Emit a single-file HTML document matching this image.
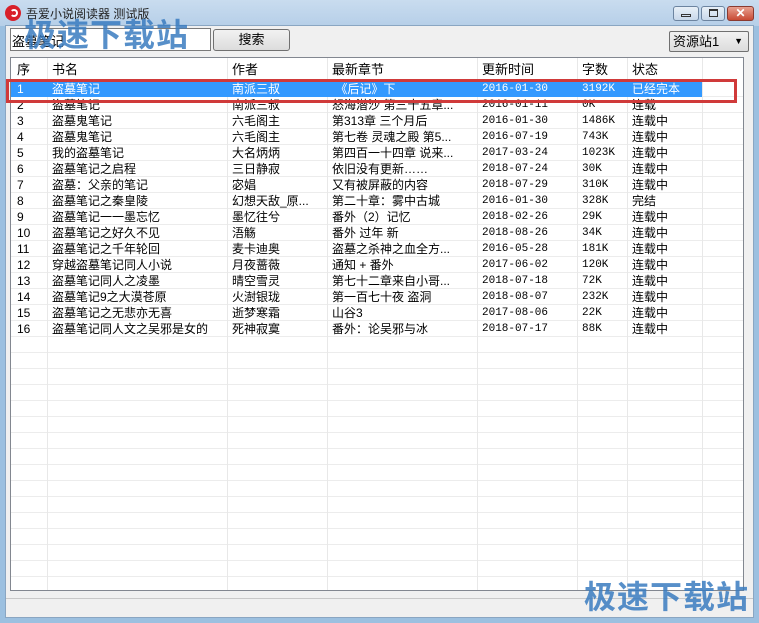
<!DOCTYPE html><html><head><meta charset="utf-8"><style>
*{margin:0;padding:0;box-sizing:border-box}
body{width:759px;height:623px;overflow:hidden;background:#9cc0e0;font-family:"Liberation Sans","Noto Sans CJK SC",sans-serif;font-size:12px;position:relative}
.a{position:absolute}
#tb{left:0;top:0;width:759px;height:26px;background:linear-gradient(#c9dcef,#b6cfe8)}
#cl{left:5px;top:25px;width:749px;height:593px;background:#f0f0f0;border:1px solid #8aa6c2}
.r{position:absolute;left:11px;width:732px;height:16px;line-height:16px;white-space:nowrap}
.r span{position:absolute;top:0;overflow:hidden}
.c0{left:6px}.c1{left:41px}.c2{left:221px}.c3{left:321px}.c4{left:471px;font-family:"Liberation Mono",monospace;font-size:11px}.c5{left:571px;font-family:"Liberation Mono",monospace;font-size:11px}.c6{left:621px}
.vl{position:absolute;top:58px;width:1px;height:532px;background:#e8e8e8}
</style></head><body>
<div class="a" id="tb"></div>
<div class="a" style="left:5px;top:5px;width:16px;height:16px;border-radius:50%;background:#d8202a"></div>
<div class="a" style="left:10px;top:9px;width:8px;height:8px;border-radius:50%;border:2px solid #fff;border-left-color:transparent"></div>
<div class="a" style="left:26px;top:5px;font-size:12px;color:#222">吾爱小说阅读器 测试版</div>
<div class="a" style="left:673px;top:6px;width:26px;height:15px;border:1px solid #6c84a0;border-radius:3px;background:linear-gradient(#e8f0f8,#c8d8ea)"></div>
<div class="a" style="left:681px;top:14px;width:10px;height:3px;border:1px solid #333"></div>
<div class="a" style="left:701px;top:6px;width:24px;height:15px;border:1px solid #6c84a0;border-radius:3px;background:linear-gradient(#e8f0f8,#c8d8ea)"></div>
<div class="a" style="left:709px;top:9px;width:9px;height:8px;border:1px solid #333;border-top-width:2px"></div>
<div class="a" style="left:727px;top:6px;width:27px;height:15px;border:1px solid #8a3a30;border-radius:3px;background:linear-gradient(#e8a090,#c84a34);color:#fff;font-weight:bold;text-align:center;line-height:13px;font-size:12px">✕</div>
<div class="a" id="cl"></div>
<div class="a" style="left:10px;top:28px;width:201px;height:23px;background:#fff;border:1px solid #7a7a7a;padding:2px 1px;font-size:13px">盗墓笔记</div>
<div class="a" style="left:213px;top:29px;width:77px;height:22px;border:1px solid #707070;border-radius:3px;background:linear-gradient(#f2f2f2,#dcdcdc);text-align:center;line-height:20px;font-size:13px">搜索</div>
<div class="a" style="left:669px;top:31px;width:80px;height:21px;border:1px solid #707070;border-radius:2px;background:linear-gradient(#f2f2f2,#dcdcdc);padding-left:3px;line-height:19px;font-size:13px">资源站1<span style="position:absolute;right:5px;font-size:9px">▼</span></div>
<div class="a" style="left:10px;top:57px;width:734px;height:534px;border:1px solid #828790;background:#fff repeating-linear-gradient(to bottom,transparent 0,transparent 39px,#ececec 39px,#ececec 40px);background:#fff"></div>
<div class="a" style="left:11px;top:96px;width:732px;height:494px;background:repeating-linear-gradient(to bottom,#ececec 0,#ececec 1px,transparent 1px,transparent 16px)"></div>
<div class="vl" style="left:47px"></div><div class="vl" style="left:227px"></div><div class="vl" style="left:327px"></div><div class="vl" style="left:477px"></div><div class="vl" style="left:577px"></div><div class="vl" style="left:627px"></div><div class="vl" style="left:702px"></div>
<div class="r" style="top:61px;height:18px;line-height:18px;font-size:13px"><span class="c0">序</span><span class="c1">书名</span><span class="c2">作者</span><span class="c3">最新章节</span><span style="left:471px">更新时间</span><span style="left:571px">字数</span><span class="c6">状态</span></div>
<div class="a" style="left:11px;top:81px;width:691px;height:16px;background:#3399ff"></div>
<div class="r" style="top:81px;color:#fff"><span class="c0">1</span><span class="c1">盗墓笔记</span><span class="c2">南派三叔</span><span class="c3">&nbsp;《后记》下</span><span class="c4">2016-01-30</span><span class="c5">3192K</span><span class="c6">已经完本</span></div>
<div class="r" style="top:97px"><span class="c0">2</span><span class="c1">盗墓笔记</span><span class="c2">南派三叔</span><span class="c3">怒海潜沙 第三十五章...</span><span class="c4">2016-01-11</span><span class="c5">0K</span><span class="c6">连载</span></div>
<div class="r" style="top:113px"><span class="c0">3</span><span class="c1">盗墓鬼笔记</span><span class="c2">六毛阁主</span><span class="c3">第313章 三个月后</span><span class="c4">2016-01-30</span><span class="c5">1486K</span><span class="c6">连载中</span></div>
<div class="r" style="top:129px"><span class="c0">4</span><span class="c1">盗墓鬼笔记</span><span class="c2">六毛阁主</span><span class="c3">第七卷 灵魂之殿 第5...</span><span class="c4">2016-07-19</span><span class="c5">743K</span><span class="c6">连载中</span></div>
<div class="r" style="top:145px"><span class="c0">5</span><span class="c1">我的盗墓笔记</span><span class="c2">大名炳炳</span><span class="c3">第四百一十四章 说来...</span><span class="c4">2017-03-24</span><span class="c5">1023K</span><span class="c6">连载中</span></div>
<div class="r" style="top:161px"><span class="c0">6</span><span class="c1">盗墓笔记之启程</span><span class="c2">三日静寂</span><span class="c3">依旧没有更新……</span><span class="c4">2018-07-24</span><span class="c5">30K</span><span class="c6">连载中</span></div>
<div class="r" style="top:177px"><span class="c0">7</span><span class="c1">盗墓：父亲的笔记</span><span class="c2">宓娼</span><span class="c3">又有被屏蔽的内容</span><span class="c4">2018-07-29</span><span class="c5">310K</span><span class="c6">连载中</span></div>
<div class="r" style="top:193px"><span class="c0">8</span><span class="c1">盗墓笔记之秦皇陵</span><span class="c2">幻想天敌_原...</span><span class="c3">第二十章：雾中古城</span><span class="c4">2016-01-30</span><span class="c5">328K</span><span class="c6">完结</span></div>
<div class="r" style="top:209px"><span class="c0">9</span><span class="c1">盗墓笔记一一墨忘忆</span><span class="c2">墨忆往兮</span><span class="c3">番外（2）记忆</span><span class="c4">2018-02-26</span><span class="c5">29K</span><span class="c6">连载中</span></div>
<div class="r" style="top:225px"><span class="c0">10</span><span class="c1">盗墓笔记之好久不见</span><span class="c2">浯觞</span><span class="c3">番外 过年 新</span><span class="c4">2018-08-26</span><span class="c5">34K</span><span class="c6">连载中</span></div>
<div class="r" style="top:241px"><span class="c0">11</span><span class="c1">盗墓笔记之千年轮回</span><span class="c2">麦卡迪奥</span><span class="c3">盗墓之杀神之血全方...</span><span class="c4">2016-05-28</span><span class="c5">181K</span><span class="c6">连载中</span></div>
<div class="r" style="top:257px"><span class="c0">12</span><span class="c1">穿越盗墓笔记同人小说</span><span class="c2">月夜蔷薇</span><span class="c3">通知 + 番外</span><span class="c4">2017-06-02</span><span class="c5">120K</span><span class="c6">连载中</span></div>
<div class="r" style="top:273px"><span class="c0">13</span><span class="c1">盗墓笔记同人之凌墨</span><span class="c2">晴空雪灵</span><span class="c3">第七十二章来自小哥...</span><span class="c4">2018-07-18</span><span class="c5">72K</span><span class="c6">连载中</span></div>
<div class="r" style="top:289px"><span class="c0">14</span><span class="c1">盗墓笔记9之大漠苍原</span><span class="c2">火澍银珑</span><span class="c3">第一百七十夜 盗洞</span><span class="c4">2018-08-07</span><span class="c5">232K</span><span class="c6">连载中</span></div>
<div class="r" style="top:305px"><span class="c0">15</span><span class="c1">盗墓笔记之无悲亦无喜</span><span class="c2">逝梦寒霜</span><span class="c3">山谷3</span><span class="c4">2017-08-06</span><span class="c5">22K</span><span class="c6">连载中</span></div>
<div class="r" style="top:321px"><span class="c0">16</span><span class="c1">盗墓笔记同人文之吴邪是女的</span><span class="c2">死神寂寞</span><span class="c3">番外：论吴邪与冰</span><span class="c4">2018-07-17</span><span class="c5">88K</span><span class="c6">连载中</span></div>
<div class="a" style="left:6px;top:79px;width:731px;height:24px;border:3px solid #d03a3a"></div>
<div class="a" style="left:6px;top:598px;width:747px;height:1px;background:#c8c8c8"></div>
<div class="a" style="left:24px;top:10px;font-size:32px;font-weight:bold;color:#3a7cc0;opacity:.85;letter-spacing:1px">极速下载站</div>
<div class="a" style="left:584px;top:572px;font-size:32px;font-weight:bold;color:#3a7cc0;opacity:.85;letter-spacing:1px">极速下载站</div>
</body></html>
